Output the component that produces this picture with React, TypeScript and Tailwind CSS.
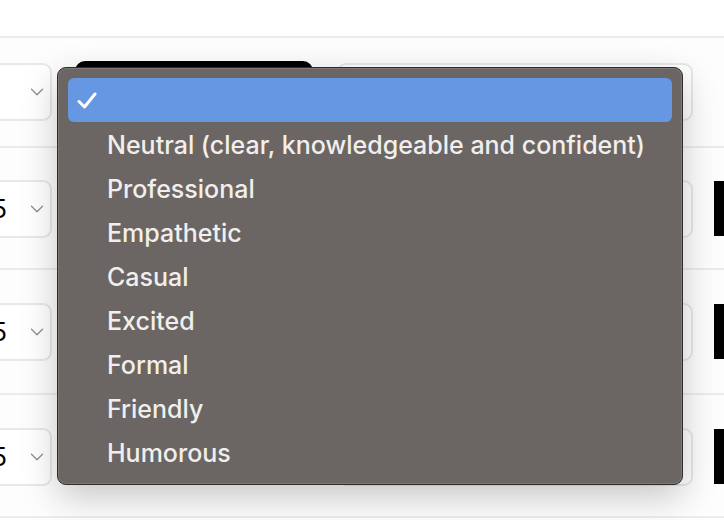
import { ChevronDown } from "lucide-react";

const tones = [
  "Neutral (clear, knowledgeable and confident)",
  "Professional",
  "Empathetic",
  "Casual",
  "Excited",
  "Formal",
  "Friendly",
  "Humorous",
];

function LeftSelect({ value }: { value?: string }) {
  return (
    <div className="ml-[-30px] flex h-[58px] w-[82px] shrink-0 items-center justify-end gap-[19px] rounded-[9px] border-2 border-[#e8e8e8] bg-white pr-[2px]">
      {value && <span className="text-[25px] leading-none text-black">{value}</span>}
      <ChevronDown className="size-[22px] text-[#8e8e8e]" strokeWidth={1.4} />
    </div>
  );
}

function Row({
  height,
  top,
  value,
  button,
  tail,
}: {
  height: string;
  top: string;
  value?: string;
  button?: boolean;
  tail?: boolean;
}) {
  return (
    <div className={`flex items-start border-b-2 border-[#ececec] ${height} ${top}`}>
      <LeftSelect value={value} />
      {button ? (
        <div className="ml-[23px] mt-[-2px] h-[59px] w-[238px] shrink-0 rounded-[10px] bg-black" />
      ) : (
        <div className="w-[261px] shrink-0" />
      )}
      <div className="flex-1" />
      <div className="h-[58px] w-[356px] shrink-0 rounded-[9px] border-2 border-[#e8e8e8] bg-white" />
      {tail ? (
        <div className="ml-[21px] mr-[-20px] mt-[1px] h-[55px] w-[30px] shrink-0 bg-black" />
      ) : (
        <div className="w-[31px] shrink-0" />
      )}
    </div>
  );
}

export default function App() {
  return (
    <div className="relative h-[520px] w-[724px] overflow-hidden bg-white font-['Inter',sans-serif]">
      <div className="h-[38px] border-b-2 border-[#ececec] bg-white" />
      <div className="bg-[#fdfdfd]">
        <Row height="h-[110px]" top="pt-[25px]" button />
        <Row height="h-[122px]" top="pt-[32px]" value="5" tail />
        <Row height="h-[125px]" top="pt-[33px]" value="5" tail />
        <Row height="h-[123px]" top="pt-[33px]" value="5" tail />
      </div>

      {/* Tone menu */}
      <div className="absolute left-[57px] top-[67px] h-[418px] w-[626px] rounded-[9px] border border-[#2f2c2b] bg-[#6b6663] p-[10px] shadow-[0_12px_36px_rgba(0,0,0,0.22),inset_0_0_0_1px_rgba(255,255,255,0.12)]">
        <div className="flex h-[44px] items-center rounded-[6px] bg-[#6597e2] pl-[9px]">
          <svg width="20" height="17" viewBox="0 0 20 17" fill="none">
            <path
              d="M2 9.5 L7.5 15 L18 2"
              stroke="#ffffff"
              strokeWidth="3"
              strokeLinecap="round"
              strokeLinejoin="round"
            />
          </svg>
        </div>
        {tones.map((tone) => (
          <div
            key={tone}
            className="flex h-[44px] items-center pl-[39px] pt-[3px] text-[25px] font-medium leading-none text-[#f1efed]"
          >
            {tone}
          </div>
        ))}
      </div>
    </div>
  );
}
